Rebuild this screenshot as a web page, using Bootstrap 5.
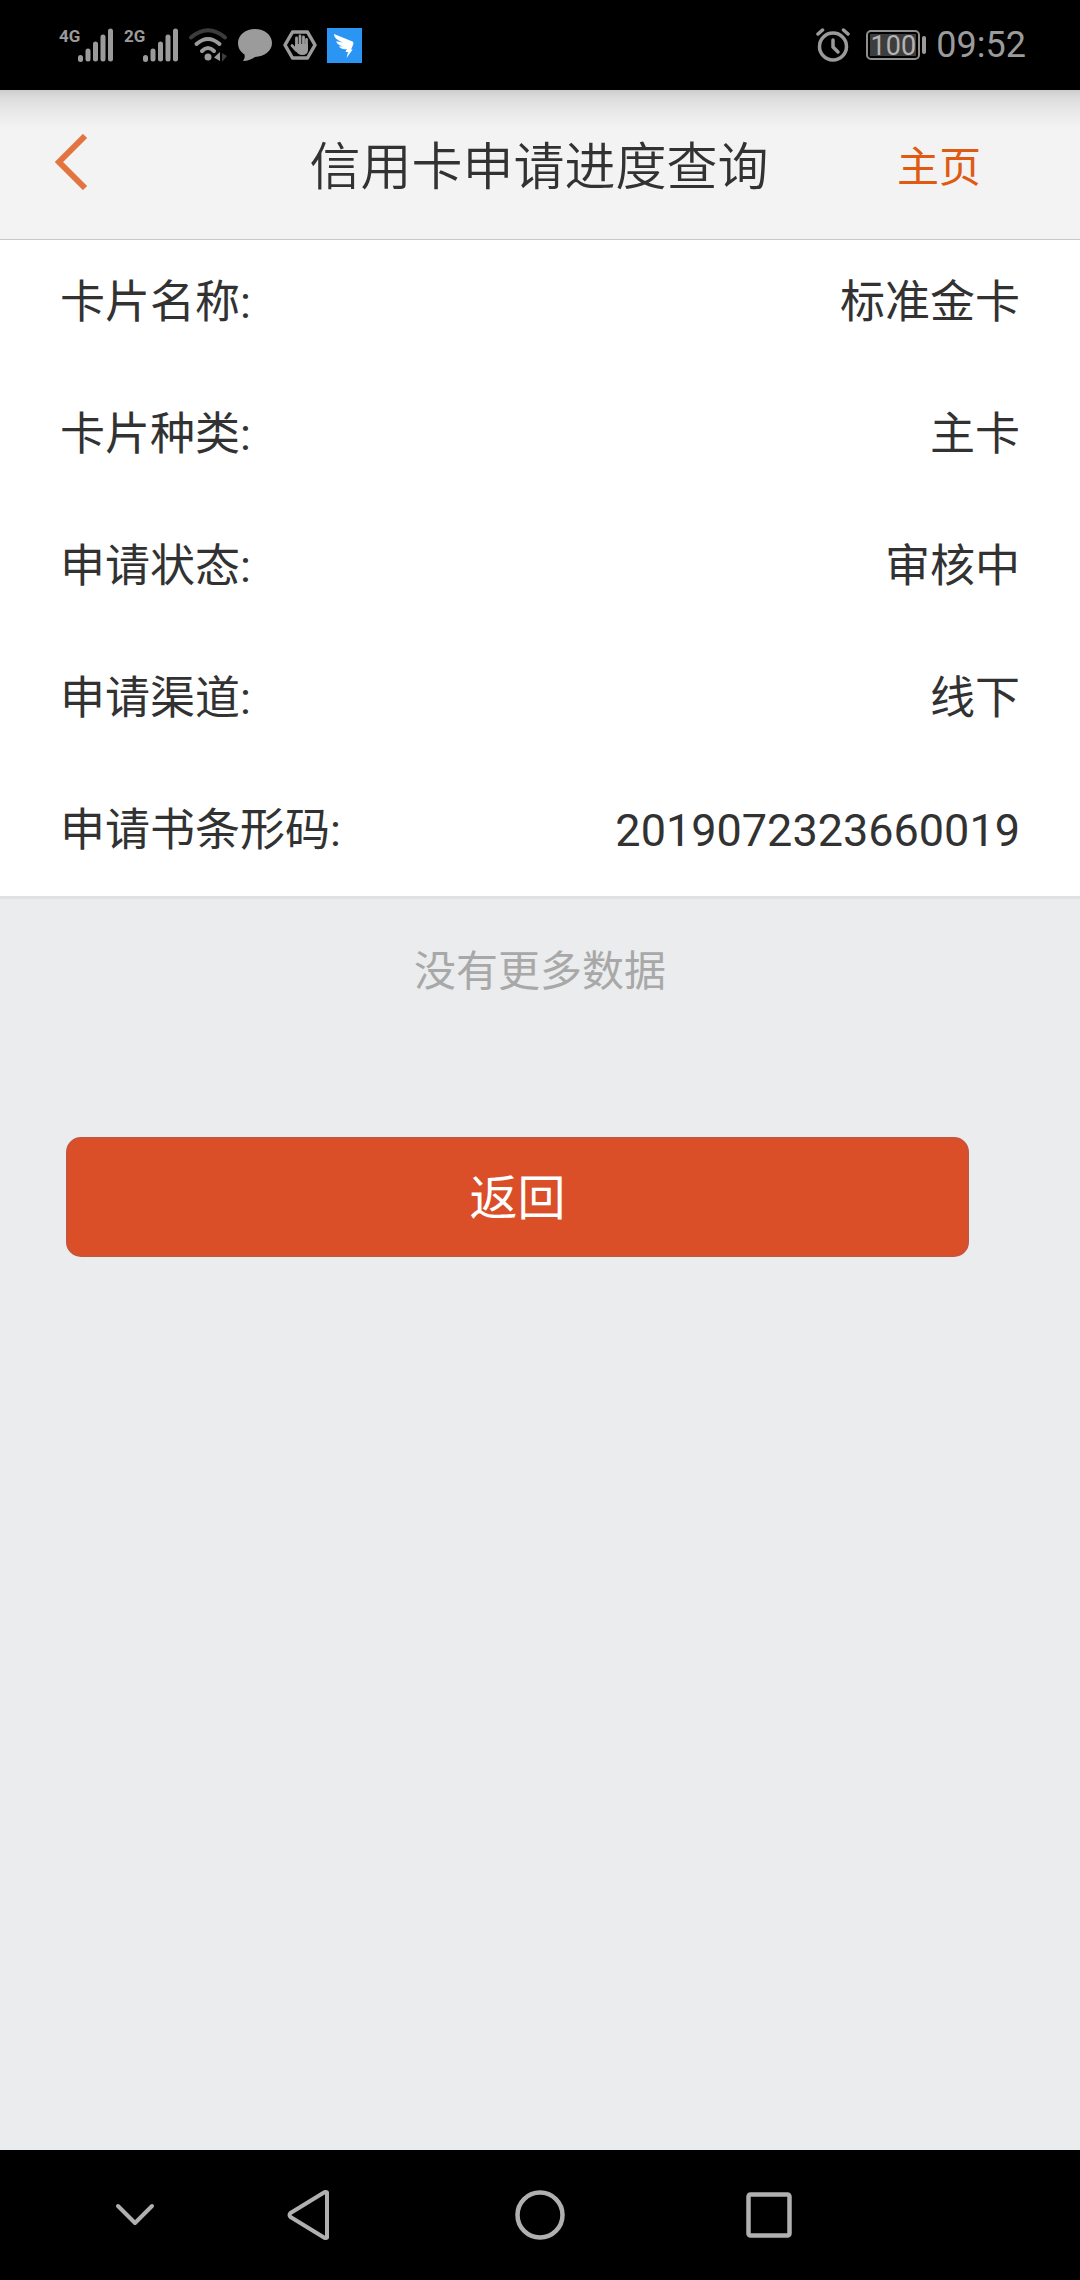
<!DOCTYPE html>
<html lang="zh-CN">
<head>
<meta charset="utf-8">
<meta name="viewport" content="width=device-width, initial-scale=1">
<title>信用卡申请进度查询</title>
<link href="https://cdn.jsdelivr.net/npm/bootstrap@5.3.0/dist/css/bootstrap.min.css" rel="stylesheet">
<style>
  body { font-family: Roboto, "Noto Sans CJK SC", sans-serif; background: #ebeced; color: #323232; }
  svg { display: block; flex: none; }

  .status-strip { height: 90px; padding: 0 54px 0 59px; background: #000; color: #9b9b9b; }
  .net-label { font: bold 17px/18px Roboto, sans-serif; margin-bottom: 18px; width: 19px; }
  .status-icons { gap: 10px; }
  .clock { font-size: 36px; line-height: 40px; margin-left: 10px; }
  .battery-box { width: 54px; height: 30px; border: 2px solid #8f8f8f; border-radius: 5px; padding: 2px; }
  .battery-level { background: #3d3d3d; color: #b4b4b4; font-size: 27px; line-height: 24px; height: 22px; }
  .battery-tip { width: 4px; height: 18px; border-radius: 2px; background: #9b9b9b; margin-left: 2px; }

  .app-header { display: grid; grid-template-columns: 1fr auto 1fr; height: 150px; padding: 6px 99px 0 54px; border-bottom: 1px solid #c8c8c8;
    background: linear-gradient(#cdcdcd, #dcdcdc 8px, #e9e9e9 22px, #f3f3f3 38px) #f3f3f3; }
  .app-header .btn { padding: 0 0 12px; }
  .app-title { font-size: 51px; line-height: 76px; font-weight: 350; padding-left: 43px; }
  .home-link { font-size: 42px; line-height: 64px; color: #e05a12; }

  .detail-list { padding: 30px 60px 32px; gap: 66px; border-bottom: 3px solid #e0e1e1; font-size: 45px; line-height: 66px; }
  .detail-list dt { font-weight: inherit; }
  .no-more { font-size: 42px; line-height: 64px; color: #a8a8a8; padding: 41px 0 39px; margin: 0; }
  .action-area { padding: 94px 111px 60px 66px; }
  .btn-return { --bs-btn-color: #fff; --bs-btn-bg: #da4e28; --bs-btn-border-color: #c8543a; --bs-btn-hover-color: #fff; --bs-btn-hover-bg: #c94622;
    --bs-btn-active-bg: #b83e1d; --bs-btn-active-color: #fff; height: 120px; padding: 4px 0 0; font-size: 48px; line-height: 72px; border-width: 2px; border-radius: 15px; }

  .nav-keys { display: grid; grid-template-columns: 36fr 42fr 44fr 41fr 37fr; height: 130px; background: #000; justify-items: center; align-items: center; }
  .nav-keys .btn, .app-header .btn { --bs-btn-border-width: 0; }
  .nav-keys .collapse-key { margin: 0 34px 0 auto; }
</style>
</head>
<body>
<div class="min-vh-100 d-flex flex-column">

  <div class="status-strip d-flex align-items-center justify-content-between">
    <div class="status-icons d-flex align-items-center">
      <div class="d-flex align-items-center">
        <span class="net-label">4G</span>
        <svg width="36" height="34" viewBox="0 0 36 34" stroke="#9b9b9b" stroke-width="5" stroke-linecap="round"><path d="M2.5 29.5v2M10 23v8M17.5 16v15M25 9v22M32.500 3v28"/></svg>
      </div>
      <div class="d-flex align-items-center">
        <span class="net-label">2G</span>
        <svg width="36" height="34" viewBox="0 0 36 34" stroke="#9b9b9b" stroke-width="5" stroke-linecap="round"><path d="M2.500 29.500v2M10 23v8M17.500 16v15M25 9v22M32.500 3v28"/></svg>
      </div>
      <svg width="38" height="34" viewBox="0 0 38 34" fill="none" stroke-width="4" stroke-linecap="round"><path d="M2 9.500Q19 -5 36 9.500" stroke="#3c3c3c"/><path d="M7.500 16Q19 6 30.500 16M13 23Q19 17 25 23" stroke="#9b9b9b"/><circle cx="19" cy="29" r="3.500" fill="#9b9b9b"/><path d="M31 24v9l-6-3.500z" fill="#9b9b9b"/><path d="M33 25v9l5-6z" fill="#3c3c3c"/></svg>
      <svg width="36" height="34" viewBox="0 0 36 34"><path d="M18 1C8.600 1 1 7 1 15c0 5 2.500 9 6.500 11.500C8 29 7.500 31 6 33c5 0 9-2 12-4 9.500-.5 17-6 17-14S27.400 1 18 1z" fill="#9b9b9b"/></svg>
      <svg width="34" height="34" viewBox="0 0 34 34" fill="none" stroke="#9b9b9b"><path d="M9.500 4h15L32 17l-7.500 13h-15L2 17z" stroke-width="3.500" stroke-linejoin="round"/><path d="M13.500 18V10M17 17V8M20.500 17V9M23.500 18v-6.500M9 17.500l4 4.500" stroke-width="2.800" stroke-linecap="round"/><path d="M12 16h13v6q0 5-6 5-4 0-7-5z" fill="#9b9b9b" stroke="none"/></svg>
      <svg width="35" height="35" viewBox="0 0 35 35"><path fill="#2b95f3" d="M0 0h35v35H0z"/><path d="M7 6l18.500 7.500c1 .5 1 1.500.8 2.500-.6 2-1.600 4-2.300 5.500h1.700L19.500 30l1.500-6h-2.500l1.300-3c-4.300.8-6.500-.8-7.800-2.800l5 .2c-4-.5-7-2-8-5.200l7 1.300C11 12.500 7 10 7 6z" fill="#fff"/></svg>
    </div>
    <div class="d-flex align-items-center">
      <svg width="34" height="34" viewBox="0 0 34 34" fill="none" stroke="#9b9b9b" stroke-linecap="round" stroke-linejoin="round"><circle cx="17" cy="18.500" r="13.500" stroke-width="3.500"/><path d="M17 12v7l5 5" stroke-width="3.500"/><path d="M2 6l4.500-4M32 6l-4.500-4" stroke-width="3.500"/></svg>
      <div class="battery-box ms-3"><div class="battery-level d-flex justify-content-center">100</div></div>
      <div class="battery-tip"></div>
      <span class="clock">09:52</span>
    </div>
  </div>

  <header class="app-header align-items-center">
    <button type="button" class="btn text-start" aria-label="返回">
      <svg width="36" height="56" viewBox="0 0 36 56" fill="none" stroke="#e3743f" stroke-width="6"><path d="M31 2L5 28l26 26"/></svg>
    </button>
    <h1 class="app-title m-0">信用卡申请进度查询</h1>
    <a href="#" class="home-link text-decoration-none text-end">主页</a>
  </header>

  <main class="flex-grow-1">
    <dl class="detail-list d-flex flex-column bg-white m-0">
      <div class="d-flex justify-content-between"><dt>卡片名称:</dt><dd class="m-0">标准金卡</dd></div>
      <div class="d-flex justify-content-between"><dt>卡片种类:</dt><dd class="m-0">主卡</dd></div>
      <div class="d-flex justify-content-between"><dt>申请状态:</dt><dd class="m-0">审核中</dd></div>
      <div class="d-flex justify-content-between"><dt>申请渠道:</dt><dd class="m-0">线下</dd></div>
      <div class="d-flex justify-content-between"><dt>申请书条形码:</dt><dd class="m-0">2019072323660019</dd></div>
    </dl>
    <p class="no-more text-center">没有更多数据</p>
    <div class="action-area">
      <button type="button" class="btn btn-return w-100">返回</button>
    </div>
  </main>

  <nav class="nav-keys" aria-label="系统导航">
    <button type="button" class="btn p-0 collapse-key" aria-label="收起"><svg width="50" height="50" viewBox="0 0 50 50" fill="none" stroke="#b0b0b0" stroke-width="4" stroke-linecap="round" stroke-linejoin="round"><path d="M8 16l17 17 17-17"/></svg></button>
    <button type="button" class="btn p-0" aria-label="后退"><svg width="50" height="50" viewBox="0 0 50 50" fill="none" stroke="#b0b0b0" stroke-width="4" stroke-linejoin="round"><path d="M44 2.500v45q-1.500 1-3 0L7.500 27q-2-2 0-4l33.500-20.500q1.500-1 3 0z"/></svg></button>
    <button type="button" class="btn p-0" aria-label="主屏幕"><svg width="50" height="50" viewBox="0 0 50 50" fill="none" stroke="#b0b0b0" stroke-width="4.500"><circle cx="25" cy="25" r="22.500"/></svg></button>
    <button type="button" class="btn p-0" aria-label="最近任务"><svg width="50" height="50" viewBox="0 0 50 50" fill="none" stroke="#b0b0b0" stroke-width="4.500"><rect x="4.500" y="4.500" width="41" height="41" rx="2"/></svg></button>
  </nav>
</div>
<script src="https://cdn.jsdelivr.net/npm/bootstrap@5.3.0/dist/js/bootstrap.bundle.min.js"></script>
</body>
</html>
